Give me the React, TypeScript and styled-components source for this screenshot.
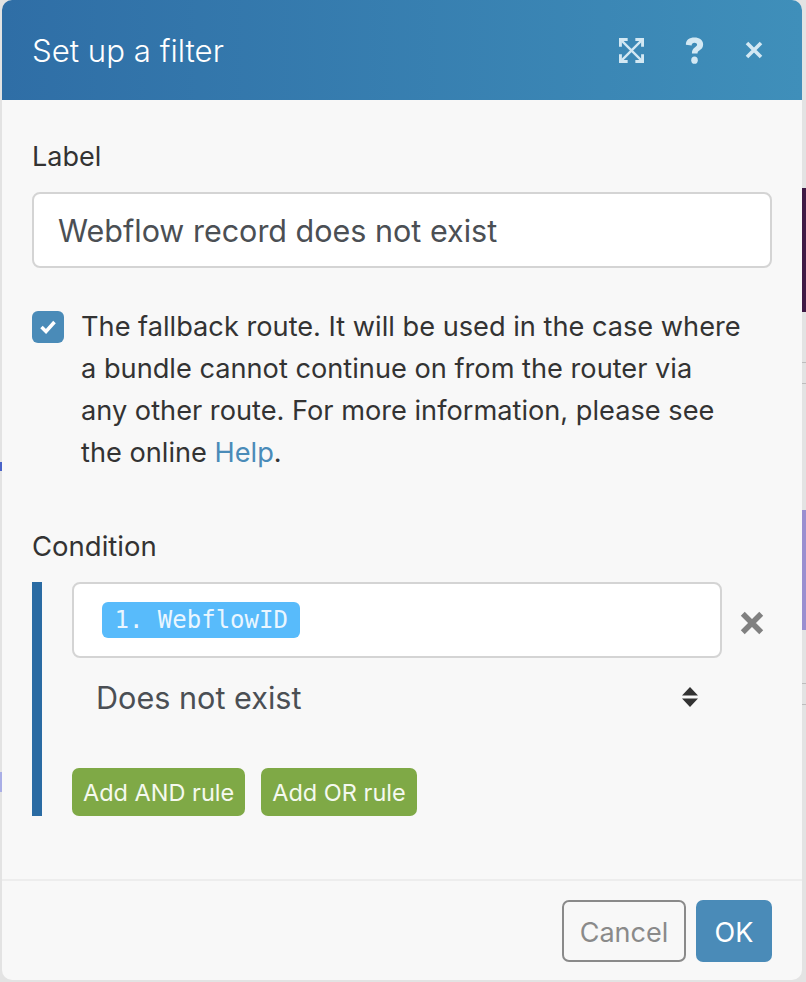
import styled, { createGlobalStyle } from "styled-components";

const GlobalStyle = createGlobalStyle`
  html, body {
    margin: 0;
    padding: 0;
    background: #e3e3e3;
  }
  * {
    box-sizing: border-box;
  }
`;

const Page = styled.div`
  position: relative;
  width: 806px;
  height: 982px;
  overflow: hidden;
  padding: 0 4px 2px 2px;
  font-family: Inter, "Liberation Sans", sans-serif;
`;

const Peek = styled.div<{ $side: "left" | "right"; $top: number; $height: number; $color: string }>`
  position: absolute;
  ${({ $side }) => $side}: 0;
  top: ${({ $top }) => $top}px;
  width: 4px;
  height: ${({ $height }) => $height}px;
  background: ${({ $color }) => $color};
`;

const Dialog = styled.div`
  position: relative;
  height: 100%;
  display: flex;
  flex-direction: column;
  background: #f8f8f8;
  border-radius: 10px;
  overflow: hidden;
`;

const Header = styled.div`
  height: 100px;
  flex: none;
  display: flex;
  align-items: center;
  padding: 0 39px 0 30px;
  background: linear-gradient(90deg, #2f6ea6, #3f8fba);
`;

const Title = styled.h1`
  flex: 1;
  margin: 2px 0 0;
  font-size: 31.2px;
  font-weight: 300;
  color: #fff;
`;

const HeaderIcons = styled.div`
  display: flex;
  align-items: center;
  gap: 41px;
  color: #d3e8f3;
`;

const Body = styled.div`
  flex: 1;
  padding: 41px 30px 0;
`;

const FieldLabel = styled.div`
  font-size: 27px;
  line-height: 32px;
  color: #333;
`;

const TextInput = styled.div`
  margin-top: 19px;
  width: 740px;
  height: 76px;
  display: flex;
  align-items: center;
  padding: 0 24px;
  background: #fff;
  border: 2px solid #d4d4d4;
  border-radius: 8px;
  font-size: 30.5px;
  color: #4b4f54;
`;

const CheckRow = styled.div`
  margin-top: 38px;
  display: flex;
  gap: 17px;
`;

const CheckBox = styled.div`
  flex: none;
  width: 32px;
  height: 32px;
  margin-top: 5px;
  border-radius: 6px;
  background: #4a8bb8;
  display: flex;
  align-items: center;
  justify-content: center;
`;

const CheckText = styled.div`
  width: 662px;
  font-size: 27.2px;
  line-height: 42px;
  color: #333;
`;

const HelpLink = styled.span`
  color: #4a8bb8;
`;

const ConditionLabel = styled(FieldLabel)`
  margin-top: 56px;
  font-size: 27.5px;
`;

const RuleGroup = styled.div`
  margin-top: 20px;
  width: 740px;
  padding-left: 30px;
  border-left: 10px solid #2a6ba3;
  height: 234px;
`;

const RuleRow = styled.div`
  display: flex;
  align-items: center;
  gap: 18px;
`;

const TokenInput = styled.div`
  width: 650px;
  height: 76px;
  display: flex;
  align-items: center;
  padding-left: 28px;
  background: #fff;
  border: 2px solid #d4d4d4;
  border-radius: 8px;
`;

const Token = styled.span`
  height: 36px;
  display: flex;
  align-items: center;
  padding: 0 12.5px;
  background: #58bbfb;
  border-radius: 6px;
  font-family: "DejaVu Sans Mono", monospace;
  font-size: 24px;
  color: #eaf6ff;
`;

const RemoveIcon = styled.svg`
  margin-top: 5px;
`;

const SelectRow = styled.div`
  width: 650px;
  height: 78px;
  display: flex;
  align-items: center;
  justify-content: space-between;
  padding: 0 24px 0 24px;
  font-size: 30.6px;
  color: #4b4f54;
`;

const RuleButtons = styled.div`
  margin-top: 32px;
  display: flex;
  gap: 16px;
`;

const RuleButton = styled.button`
  height: 48px;
  padding: 0 11px;
  border: 0;
  border-radius: 7px;
  background: #7fa946;
  font-family: inherit;
  font-size: 23.5px;
  color: #f5f9ef;
`;

const Footer = styled.div`
  height: 101px;
  flex: none;
  display: flex;
  justify-content: flex-end;
  gap: 10px;
  padding: 19px 30px 0 0;
  border-top: 2px solid #ededed;
`;

const FooterButton = styled.button<{ $primary?: boolean }>`
  width: ${({ $primary }) => ($primary ? "76px" : "124px")};
  height: 62px;
  padding: 2px 0 0;
  border: ${({ $primary }) => ($primary ? "0" : "2px solid #8a8a8a")};
  border-radius: 7px;
  background: ${({ $primary }) => ($primary ? "#4a8bb8" : "transparent")};
  font-family: inherit;
  font-size: 27px;
  color: ${({ $primary }) => ($primary ? "#fff" : "#8a8a8a")};
`;

export default function App() {
  return (
    <Page>
      <GlobalStyle />
      <Peek $side="right" $top={188} $height={124} $color="#3f1a45" />
      <Peek $side="right" $top={362} $height={1} $color="#bdbdbd" />
      <Peek $side="right" $top={383} $height={1} $color="#bdbdbd" />
      <Peek $side="right" $top={510} $height={120} $color="#9a8fd0" />
      <Peek $side="right" $top={683} $height={1} $color="#bdbdbd" />
      <Peek $side="right" $top={704} $height={1} $color="#bdbdbd" />
      <Peek $side="left" $top={462} $height={9} $color="#4a63c8" />
      <Peek $side="left" $top={772} $height={20} $color="#a9aee6" />
      <Dialog>
        <Header>
          <Title>Set up a filter</Title>
          <HeaderIcons>
            <svg width="25" height="25" viewBox="0 0 26 26" fill="none" stroke="currentColor" strokeWidth="2.4">
              <path d="M3 3 23 23M23 3 3 23" />
              <path d="M1.5 9V1.5H9M17 1.5h7.5V9M24.5 17v7.5H17M9 24.5H1.5V17" strokeWidth="3" />
            </svg>
            <svg width="19" height="27" viewBox="0 0 22 28" preserveAspectRatio="none" fill="currentColor">
              <path d="M1 8C1 3 5 .5 11 .5c5.500 0 10 2.500 10 7.200 0 3.300-2 4.800-4 6-1.700 1-2.500 1.600-2.500 3.300H8c0-3.500 1.300-5 3.300-6.200 1.500-.9 2.700-1.500 2.700-2.900 0-1.200-1.300-2-3-2-2 0-3.200 1-3.300 2.800z" />
              <circle cx="11" cy="24" r="3.800" />
            </svg>
            <svg width="18" height="18" viewBox="0 0 18 18" stroke="currentColor" strokeWidth="3.600">
              <path d="M2 2 16 16M16 2 2 16" />
            </svg>
          </HeaderIcons>
        </Header>
        <Body>
          <FieldLabel>Label</FieldLabel>
          <TextInput>Webflow record does not exist</TextInput>
          <CheckRow>
            <CheckBox>
              <svg width="16" height="14" viewBox="0 0 16 14" fill="none" stroke="#fff" strokeWidth="3.500">
                <path d="M1.500 7 6 11.500 14.500 2" />
              </svg>
            </CheckBox>
            <CheckText>
              The fallback route. It will be used in the case where a bundle cannot continue on from the router via any
              other route. For more information, please see the online <HelpLink>Help</HelpLink>.
            </CheckText>
          </CheckRow>
          <ConditionLabel>Condition</ConditionLabel>
          <RuleGroup>
            <RuleRow>
              <TokenInput>
                <Token>1. WebflowID</Token>
              </TokenInput>
              <RemoveIcon width="24" height="24" viewBox="0 0 26 26" stroke="#808080" strokeWidth="6">
                <path d="M3 3 23 23M23 3 3 23" />
              </RemoveIcon>
            </RuleRow>
            <SelectRow>
              Does not exist
              <svg width="16" height="20" viewBox="0 0 16 20" fill="#333">
                <path d="M8 0 16 8.500H0zM0 11.500H16L8 20z" />
              </svg>
            </SelectRow>
            <RuleButtons>
              <RuleButton>Add AND rule</RuleButton>
              <RuleButton>Add OR rule</RuleButton>
            </RuleButtons>
          </RuleGroup>
        </Body>
        <Footer>
          <FooterButton>Cancel</FooterButton>
          <FooterButton $primary>OK</FooterButton>
        </Footer>
      </Dialog>
    </Page>
  );
}
